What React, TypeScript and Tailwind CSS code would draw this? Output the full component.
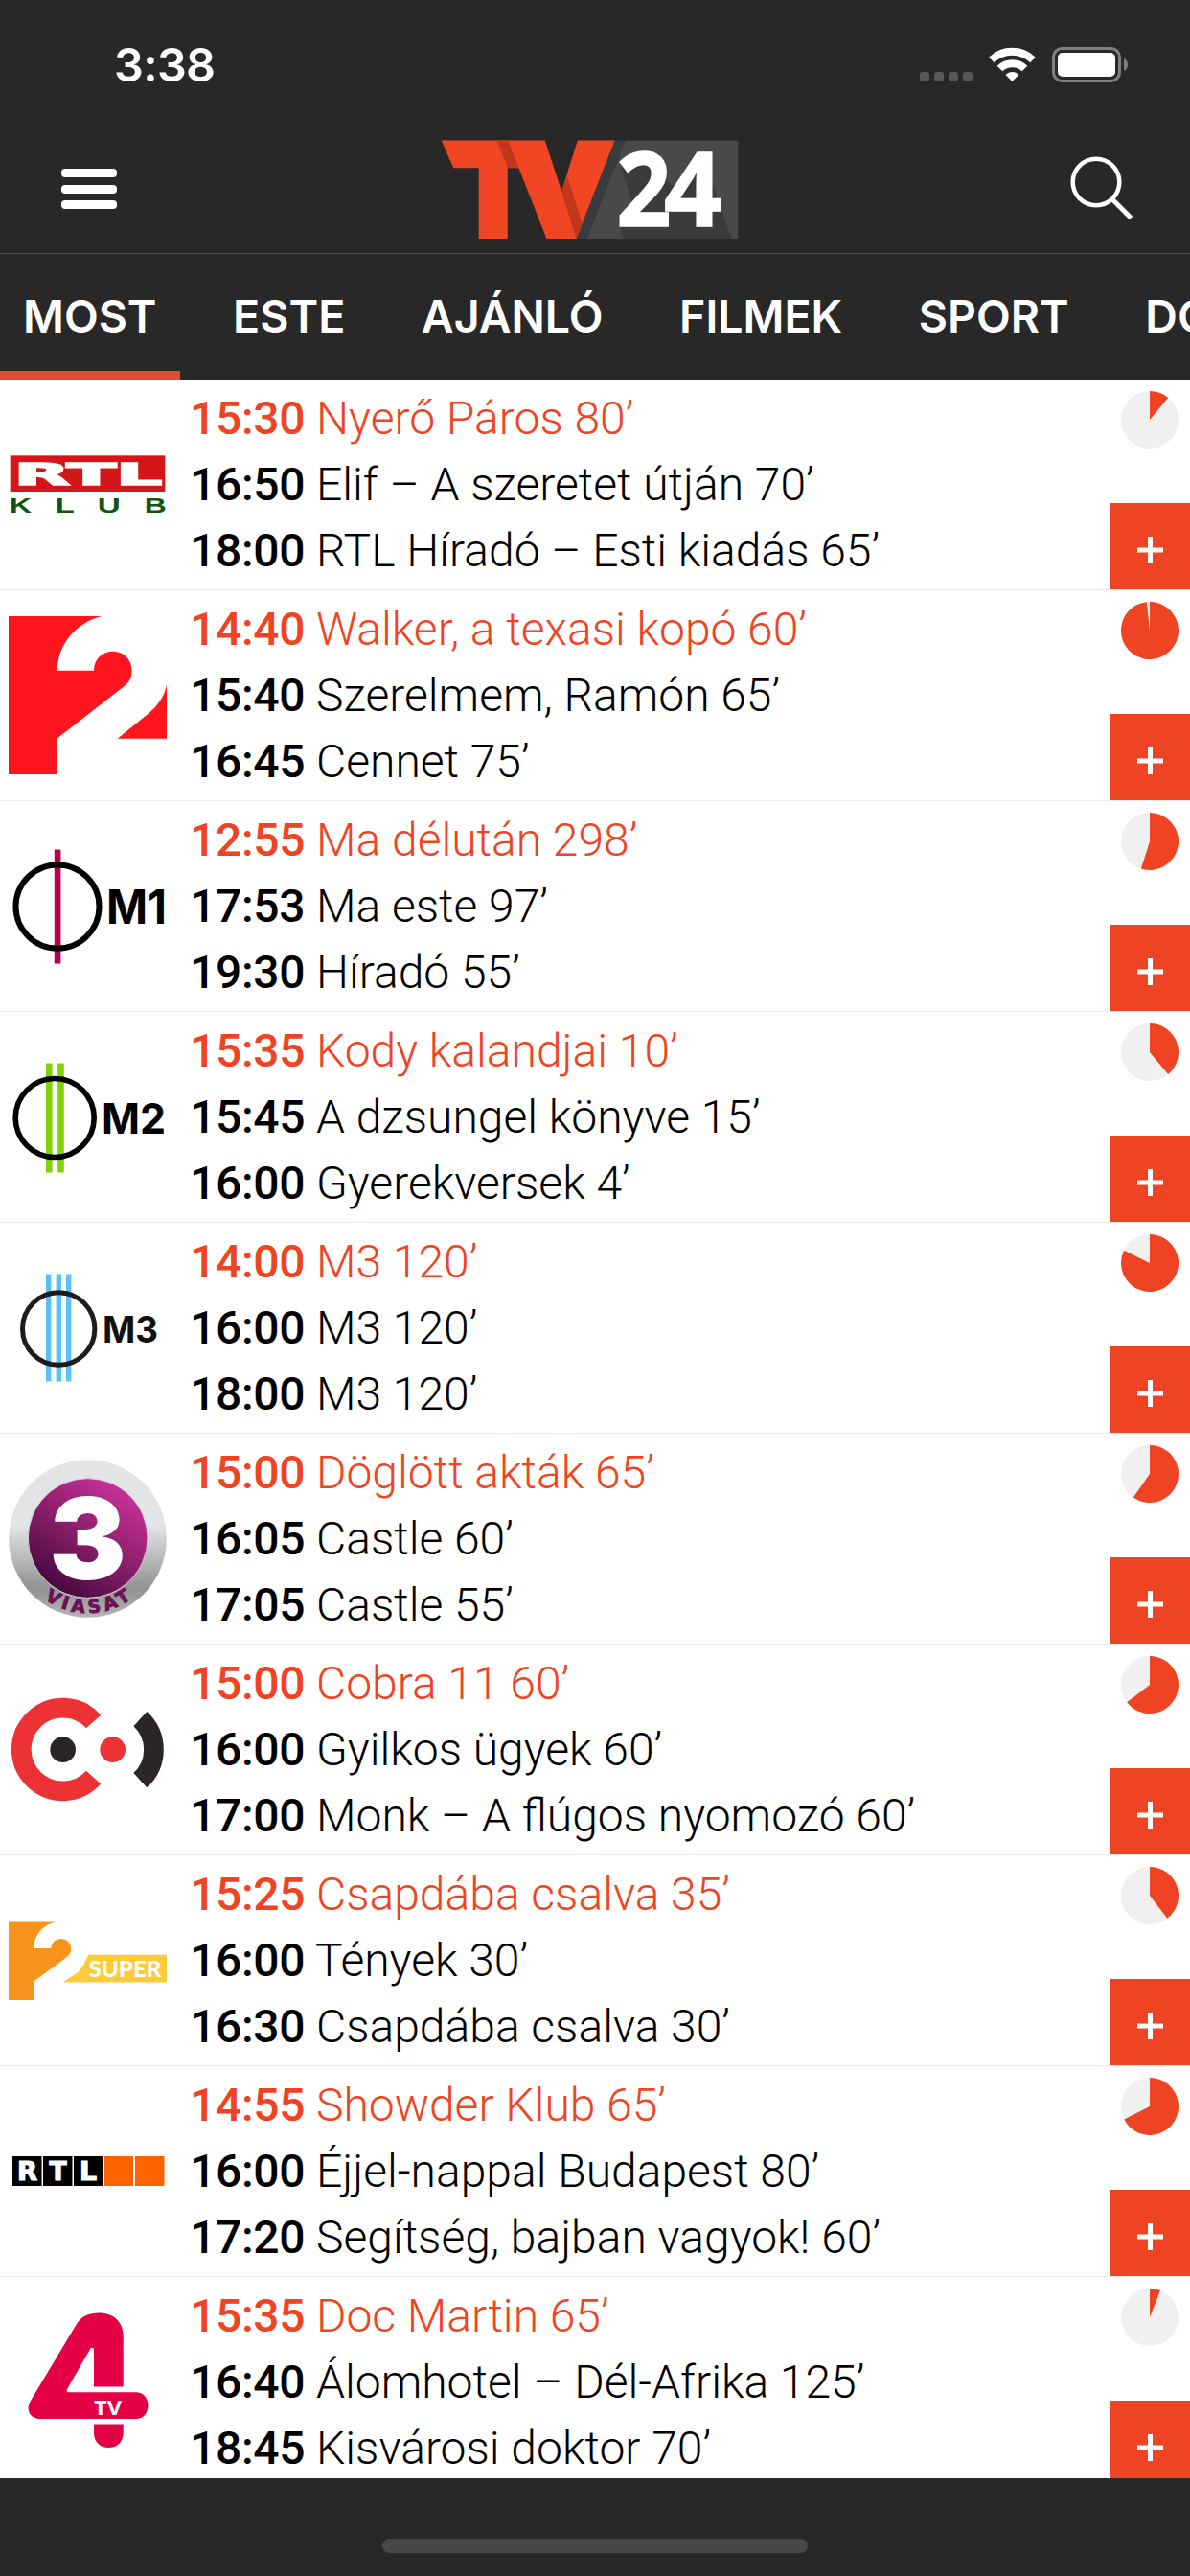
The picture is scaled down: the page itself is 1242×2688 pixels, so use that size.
import { ReactNode } from "react";

type Show = [time: string, title: string];

interface Channel {
  name: string;
  logo: ReactNode;
  progress: number;
  shows: Show[];
}

const tabs = ["MOST", "ESTE", "AJÁNLÓ", "FILMEK", "SPORT", "DOKU"];

const RtlKlubLogo = () => (
  <svg viewBox="27 99 495 495" className="size-[165px]">
    <rect x="32" y="256" width="485" height="113" fill="#d41618" />
    <g fontFamily="'DejaVu Sans', sans-serif" fontWeight="bold">
      <text x="44" y="347" fontSize="94" fill="#fff" stroke="#fff" strokeWidth="5" textLength="464" lengthAdjust="spacingAndGlyphs">
        RTL
      </text>
    </g>
    <g fontFamily="'Liberation Sans', sans-serif" fontWeight="bold" fontSize="67" fill="#15540f">
      <text x="29" y="435" textLength="70" lengthAdjust="spacingAndGlyphs">K</text>
      <text x="173" y="435" textLength="60" lengthAdjust="spacingAndGlyphs">L</text>
      <text x="305" y="435" textLength="72" lengthAdjust="spacingAndGlyphs">U</text>
      <text x="452" y="435" textLength="69" lengthAdjust="spacingAndGlyphs">B</text>
    </g>
  </svg>
);

const Tv2Logo = () => (
  <svg viewBox="27 759 495 495" className="size-[165px]">
    <path
      fill="#ff151d"
      d="M27 759H318C238 780 180 846 180 929H294C294 893 320 869 354 869C388 869 413 896 413 930C413 950 405 966 390 977L180 1141V1254H27ZM522 972V1142H368L464 1064C496 1038 516 1008 522 972Z"
    />
  </svg>
);

const M1Logo = () => (
  <svg viewBox="9 863 165 165" className="size-[165px] overflow-visible">
    <rect x="56.8" y="886.5" width="6.6" height="119" fill="#b8004e" />
    <circle cx="60" cy="946" r="43.5" fill="none" stroke="#000" strokeWidth="6" />
    <text x="111" y="963.500" fontFamily="Inter, sans-serif" fontWeight="700" fontSize="49" textLength="63" lengthAdjust="spacingAndGlyphs">
      M1
    </text>
  </svg>
);

const M2Logo = () => (
  <svg viewBox="9 1083 165 165" className="size-[165px]">
    <rect x="48" y="1109.5" width="6.6" height="114" fill="#80d20a" />
    <rect x="60.2" y="1109.5" width="6.6" height="114" fill="#80d20a" />
    <circle cx="57.2" cy="1166.5" r="41" fill="none" stroke="#000" strokeWidth="5.6" />
    <text x="106" y="1183" fontFamily="Inter, sans-serif" fontWeight="700" fontSize="44" textLength="67" lengthAdjust="spacingAndGlyphs">
      M2
    </text>
  </svg>
);

const M3Logo = () => (
  <svg viewBox="9 1303 165 165" className="size-[165px]">
    <rect x="48" y="1329.5" width="5.4" height="112" fill="#58c3f2" />
    <rect x="58.6" y="1329.5" width="5.4" height="112" fill="#58c3f2" />
    <rect x="69" y="1329.5" width="5.4" height="112" fill="#58c3f2" />
    <circle cx="61.2" cy="1386.5" r="37.7" fill="none" stroke="#1f1a1b" strokeWidth="5" />
    <text x="107" y="1401" fontFamily="Inter, sans-serif" fontWeight="700" fontSize="38" fill="#111" textLength="58" lengthAdjust="spacingAndGlyphs">
      M3
    </text>
  </svg>
);

const Viasat3Logo = () => (
  <svg viewBox="27 99 495 495" className="size-[165px]">
    <defs>
      <linearGradient id="viasat-ring" x1="0" y1="0" x2="0" y2="1">
        <stop offset="0" stopColor="#e2e4e5" />
        <stop offset="0.42" stopColor="#e2e4e5" />
        <stop offset="0.82" stopColor="#8f9192" />
        <stop offset="1" stopColor="#b4b6b7" />
      </linearGradient>
      <linearGradient id="viasat-disc" x1="0.8" y1="0.12" x2="0.25" y2="0.92">
        <stop offset="0" stopColor="#c33096" />
        <stop offset="0.5" stopColor="#8a1e6b" />
        <stop offset="1" stopColor="#4a0a40" />
      </linearGradient>
      <path id="viasat-arc" d="M43 347A232 232 0 0 0 507 347" />
    </defs>
    <circle cx="274.5" cy="346.5" r="247" fill="url(#viasat-ring)" />
    <circle cx="275" cy="345" r="187" fill="url(#viasat-disc)" stroke="#d6cfd6" strokeWidth="3" />
    <text x="154" y="474" fontFamily="Inter, sans-serif" fontWeight="900" fontSize="354" fill="#fff" textLength="242" lengthAdjust="spacingAndGlyphs">
      3
    </text>
    <text fontFamily="'DejaVu Sans', sans-serif" fontWeight="bold" fontSize="56" letterSpacing="13" fill="#6c1155" stroke="#6c1155" strokeWidth="3" textAnchor="middle">
      <textPath href="#viasat-arc" startOffset="51%">
        VIASAT
      </textPath>
    </text>
  </svg>
);

const CoolLogo = () => (
  <svg viewBox="27 759 495 495" className="size-[165px]">
    <path d="M293 919A130 130 0 1 0 293 1094" fill="none" stroke="#ec3234" strokeWidth="62" />
    <circle cx="197" cy="1007" r="40" fill="#2a2627" />
    <circle cx="353" cy="1007" r="40" fill="#ec3234" />
    <path d="M439 911A130 130 0 0 1 439 1103" fill="none" stroke="#2a2627" strokeWidth="62" />
  </svg>
);

const SuperTv2Logo = () => (
  <svg viewBox="9 1963 165 165" className="size-[165px]">
    <path
      fill="#f8931c"
      d="M9 2005.500H58C45 2008.500 35.300 2019 35.300 2033H53.500C53.500 2027 58 2023 63.700 2023C69.500 2023 74.300 2027.500 74.300 2033.500C74.300 2037 72.500 2040 70 2042L35.300 2067.500V2087H9Z"
    />
    <path fill="#ffcb38" d="M92 2039.700H174V2068.500H65.500L81 2058C86.500 2053 89 2047 92 2039.700Z" />
    <text x="92.500" y="2063" fontFamily="Lato, sans-serif" fontWeight="900" fontSize="23" fill="#fff" textLength="76" lengthAdjust="spacingAndGlyphs">
      SUPER
    </text>
  </svg>
);

const RtlIILogo = () => (
  <svg viewBox="9 2183 165 165" className="size-[165px]">
    {[13, 45, 77].map((x) => (
      <rect key={x} x={x} y="2250" width="30.500" height="31" />
    ))}
    <rect x="109" y="2250" width="30" height="31" fill="#ff6300" />
    <rect x="141" y="2250" width="30.500" height="31" fill="#ff6300" />
    <g fontFamily="'DejaVu Sans', sans-serif" fontWeight="bold" fontSize="26" fill="#fff" stroke="#fff" strokeWidth="1.2">
      <text x="18" y="2275" textLength="21" lengthAdjust="spacingAndGlyphs">R</text>
      <text x="51.500" y="2275" textLength="18" lengthAdjust="spacingAndGlyphs">T</text>
      <text x="83" y="2275" textLength="18" lengthAdjust="spacingAndGlyphs">L</text>
    </g>
  </svg>
);

const Tv4Logo = () => (
  <svg viewBox="9 2403 165 165" className="size-[165px]">
    <path
      fill="#e40045"
      fillRule="evenodd"
      d="M128.700 2490.500H98V2452C98 2449.500 96 2449 94.500 2450.500L70 2493C69 2495.500 70 2496.300 72 2496.300H142C149.500 2496.300 154.500 2502.500 154.500 2510C154.500 2518 149.500 2524 142 2524H42C31 2524 26.500 2514 32 2505L80 2425C85 2417 93 2413.500 103 2413.500C119 2413.500 128.700 2423 128.700 2438Z"
    />
    <path fill="#e40045" d="M98 2529.500H128.700V2538C128.700 2548 122.500 2554 113.300 2554C104 2554 98 2548 98 2538Z" />
    <text x="98" y="2519.500" fontFamily="'Open Sans', sans-serif" fontWeight="700" fontSize="22" fill="#fff" textLength="29" lengthAdjust="spacingAndGlyphs">
      TV
    </text>
  </svg>
);

const channels: Channel[] = [
  {
    name: "RTL Klub",
    logo: <RtlKlubLogo />,
    progress: 0.11,
    shows: [
      ["15:30", "Nyerő Páros 80’"],
      ["16:50", "Elif – A szeretet útján 70’"],
      ["18:00", "RTL Híradó – Esti kiadás 65’"],
    ],
  },
  {
    name: "TV2",
    logo: <Tv2Logo />,
    progress: 0.983,
    shows: [
      ["14:40", "Walker, a texasi kopó 60’"],
      ["15:40", "Szerelmem, Ramón 65’"],
      ["16:45", "Cennet 75’"],
    ],
  },
  {
    name: "M1",
    logo: <M1Logo />,
    progress: 0.549,
    shows: [
      ["12:55", "Ma délután 298’"],
      ["17:53", "Ma este 97’"],
      ["19:30", "Híradó 55’"],
    ],
  },
  {
    name: "M2",
    logo: <M2Logo />,
    progress: 0.39,
    shows: [
      ["15:35", "Kody kalandjai 10’"],
      ["15:45", "A dzsungel könyve 15’"],
      ["16:00", "Gyerekversek 4’"],
    ],
  },
  {
    name: "M3",
    logo: <M3Logo />,
    progress: 0.823,
    shows: [
      ["14:00", "M3 120’"],
      ["16:00", "M3 120’"],
      ["18:00", "M3 120’"],
    ],
  },
  {
    name: "Viasat 3",
    logo: <Viasat3Logo />,
    progress: 0.597,
    shows: [
      ["15:00", "Döglött akták 65’"],
      ["16:05", "Castle 60’"],
      ["17:05", "Castle 55’"],
    ],
  },
  {
    name: "Cool",
    logo: <CoolLogo />,
    progress: 0.646,
    shows: [
      ["15:00", "Cobra 11 60’"],
      ["16:00", "Gyilkos ügyek 60’"],
      ["17:00", "Monk – A flúgos nyomozó 60’"],
    ],
  },
  {
    name: "Super TV2",
    logo: <SuperTv2Logo />,
    progress: 0.396,
    shows: [
      ["15:25", "Csapdába csalva 35’"],
      ["16:00", "Tények 30’"],
      ["16:30", "Csapdába csalva 30’"],
    ],
  },
  {
    name: "RTL II",
    logo: <RtlIILogo />,
    progress: 0.675,
    shows: [
      ["14:55", "Showder Klub 65’"],
      ["16:00", "Éjjel-nappal Budapest 80’"],
      ["17:20", "Segítség, bajban vagyok! 60’"],
    ],
  },
  {
    name: "TV4",
    logo: <Tv4Logo />,
    progress: 0.06,
    shows: [
      ["15:35", "Doc Martin 65’"],
      ["16:40", "Álomhotel – Dél-Afrika 125’"],
      ["18:45", "Kisvárosi doktor 70’"],
    ],
  },
];

const StatusBar = () => (
  <div className="flex h-[132px] items-start justify-between pl-[119px] pr-[64px] pt-[49px]">
    <span className="text-[48.500px] leading-[38px] font-semibold tracking-[-0.7px]">3:38</span>
    <svg viewBox="960 49 218 38" className="h-[38px] w-[218px]">
      {[960, 975, 990, 1005].map((x) => (
        <rect key={x} x={x} y="75" width="10" height="10" rx="3" fill="#585858" />
      ))}
      <g fill="none" stroke="#fff" strokeWidth="8">
        <path d="M1034.800 62.500A31 31 0 0 1 1078 62.500" />
        <path d="M1043.500 71.500A18.500 18.500 0 0 1 1069.500 71.500" />
      </g>
      <path fill="#fff" d="M1056.400 85L1049.500 78C1053.500 74 1059.500 74 1063.300 78Z" />
      <rect x="1099.500" y="50.500" width="69" height="34" rx="9" fill="none" stroke="#7f7f7f" strokeWidth="3" />
      <rect x="1104" y="55" width="60" height="25" rx="5" fill="#fff" />
      <path fill="#7f7f7f" d="M1173 61C1178.300 63 1178.300 72 1173 74Z" />
    </svg>
  </div>
);

const Logo = () => (
  <svg viewBox="60 46 932 314" className="h-[105px] w-[311px] overflow-visible">
    <path fill="#48494b" d="M604 51H984Q990 51 990 57V351Q990 357 984 357H484Z" />
    <path fill="#3a3b3d" d="M604 51H638L518 357H484Z" />
    <path fill="#3a3b3d" d="M624 136L720 120L790 200L876 92L970 357H632L620 320L658 240Z" />
    <path fill="#f04623" d="M62 50H386L438 210L488 50H604L484 357H391L304 136H269V357H179V136H100Z" />
    <path fill="#c0371c" d="M236 50H270L304 136H269Z" />
    <path fill="#c0371c" d="M456 163L502 308L484 357L438 210Z" />
    <g fontFamily="'Open Sans', sans-serif" fontWeight="700" fontSize="322" fill="#fff" stroke="#fff" strokeWidth="4">
      <text x="609" y="319" textLength="172" lengthAdjust="spacingAndGlyphs">2</text>
      <text x="758" y="319" textLength="182" lengthAdjust="spacingAndGlyphs">4</text>
    </g>
  </svg>
);

const Header = () => (
  <div className="flex h-[133px] items-start justify-between border-b border-[#4b4b4b] pl-[64px] pr-[58px]">
    <button className="mt-[44px] flex w-[58px] flex-col gap-[7.500px]">
      <span className="h-[9px] rounded-[4px] bg-white" />
      <span className="h-[9px] rounded-[4px] bg-white" />
      <span className="h-[9px] rounded-[4px] bg-white" />
    </button>
    <div className="mt-[13px] pr-[7px]">
      <Logo />
    </div>
    <svg viewBox="0 0 68 68" className="mt-[30px] size-[68px]" fill="none" stroke="#fff">
      <circle cx="28" cy="28" r="24.300" strokeWidth="4.500" />
      <path d="M44.500 45.500L64.500 65.500" strokeWidth="5" />
    </svg>
  </div>
);

const Tabs = () => (
  <div className="flex h-[131px] gap-[31.500px] overflow-hidden">
    {tabs.map((tab, i) => (
      <button
        key={tab}
        className={`shrink-0 border-b-[9px] px-6 pt-[10px] text-[46.500px] font-semibold ${i === 0 ? "border-[#e24b2d]" : "border-transparent"}`}
      >
        {tab}
      </button>
    ))}
  </div>
);

const ProgressPie = ({ value }: { value: number }) => {
  const angle = value * 2 * Math.PI;
  const x = 30 + 30 * Math.sin(angle);
  const y = 30 - 30 * Math.cos(angle);

  return (
    <svg viewBox="0 0 60 60" className="mr-3 size-[60px]">
      <circle cx="30" cy="30" r="30" fill="#f0f0f0" />
      <path d={`M30 30V0A30 30 0 ${value > 0.5 ? 1 : 0} 1 ${x} ${y}Z`} fill="#ef4423" />
    </svg>
  );
};

const ChannelRow = ({ channel }: { channel: Channel }) => (
  <div className="flex h-[220px] shrink-0 border-b border-[#ebebeb]">
    <div className="flex w-[198px] items-start pl-[9px] pt-[27px]" aria-label={channel.name}>
      {channel.logo}
    </div>
    <div className="flex-1 pt-[6px] font-[Roboto,sans-serif] text-[48px] leading-[69px] font-light whitespace-nowrap">
      {channel.shows.map(([time, title], i) => (
        <p key={time} className={i === 0 ? "text-[#ef4423]" : "text-black"}>
          <span className="font-medium tracking-[-0.3px]">{time}</span> {title}
        </p>
      ))}
    </div>
    <div className="flex flex-col items-end justify-between pt-3">
      <ProgressPie value={channel.progress} />
      <button className="flex h-[90px] w-[84px] bg-[#ef4423] pl-[29px] pt-[35px]">
        <svg viewBox="0 0 27 28" className="h-[28px] w-[27px]" stroke="#fff" strokeWidth="5">
          <path d="M13.500 0V28M0 14H27" />
        </svg>
      </button>
    </div>
  </div>
);

const App = () => {
  return (
    <div className="flex h-[2688px] w-[1242px] flex-col overflow-hidden bg-[#282828] font-[Inter,sans-serif] text-white">
      <StatusBar />
      <Header />
      <Tabs />
      <div className="flex h-[2190px] flex-col overflow-hidden bg-white">
        {channels.map((channel) => (
          <ChannelRow key={channel.name} channel={channel} />
        ))}
      </div>
      {/* home indicator */}
      <div className="mx-auto mt-[63px] h-[15px] w-[444px] rounded-full bg-[#484848]" />
    </div>
  );
};

export default App;
